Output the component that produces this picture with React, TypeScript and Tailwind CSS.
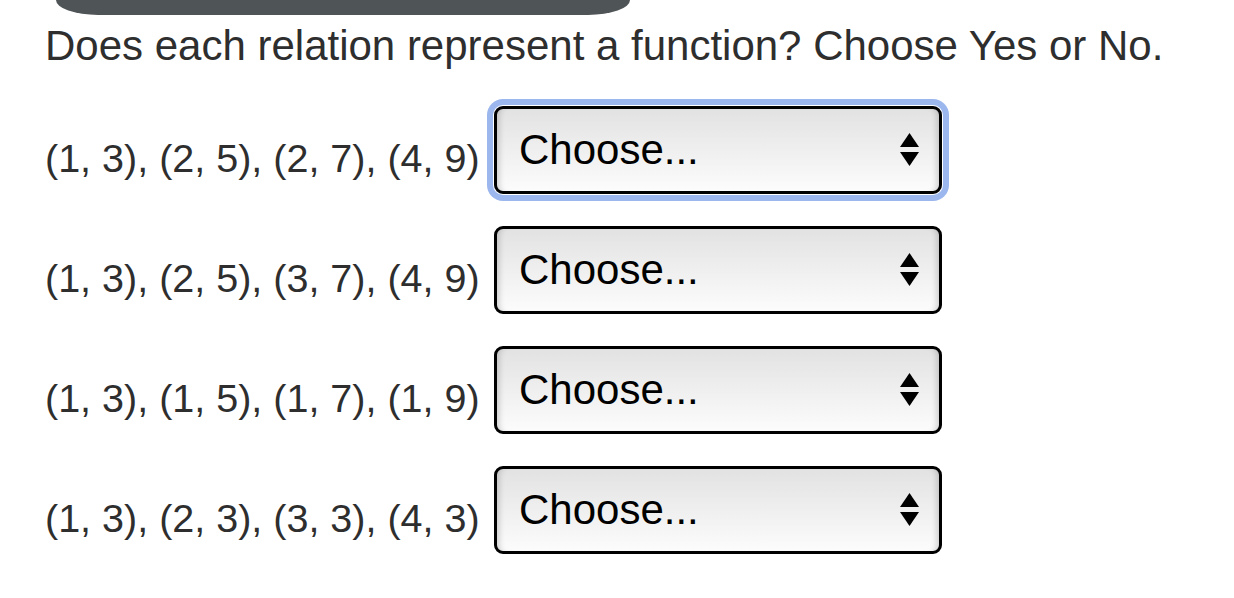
import React from 'react';

const relations = [
	'(1, 3), (2, 5), (2, 7), (4, 9)',
	'(1, 3), (2, 5), (3, 7), (4, 9)',
	'(1, 3), (1, 5), (1, 7), (1, 9)',
	'(1, 3), (2, 3), (3, 3), (4, 3)',
];

const SelectArrows = () => (
	<svg width="19" height="34" viewBox="0 0 19 34" className="shrink-0">
		<polygon points="9.5,0 19,14 0,14" fill="#000" />
		<polygon points="0,19 19,19 9.5,33" fill="#000" />
	</svg>
);

const ChooseBox = ({ focused }: { focused: boolean }) => (
	<div
		className={`flex h-[88px] w-[448px] shrink-0 items-center justify-between rounded-[9px] border-[3px] border-black bg-gradient-to-b from-[#e2e2e2] via-[#efefef] to-[#fcfcfc] pl-[22px] pr-[20px] ${
			focused
				? 'shadow-[inset_7px_0_6px_-5px_rgba(0,0,0,0.18),inset_-7px_0_6px_-5px_rgba(0,0,0,0.18),0_0_0_1px_#ffffff,0_0_0_7px_#9bb7ee]'
				: 'shadow-[inset_7px_0_6px_-5px_rgba(0,0,0,0.18),inset_-7px_0_6px_-5px_rgba(0,0,0,0.18)]'
		}`}
	>
		<span className="text-[42px] leading-none text-black">Choose...</span>
		<SelectArrows />
	</div>
);

export default function App() {
	return (
		<div className="min-h-[598px] w-[1234px] bg-white font-['Liberation_Sans',Arial,sans-serif]">
			{/* cut-off header bar */}
			<div className="ml-[56px] h-[15px] w-[574px] rounded-bl-[42px_15px] rounded-br-[42px_15px] bg-[#4f5457]" />

			<div className="pl-[45px]">
				<h1 className="mt-[10px] text-[42px] font-normal leading-none text-[#2e2e2e]">
					Does each relation represent a function? Choose Yes or No.
				</h1>

				<div className="mt-[39px] flex flex-col gap-[32px]">
					{relations.map((rel, i) => (
						<div key={rel} className="flex items-center">
							<span className="w-[449px] shrink-0 whitespace-nowrap pt-[18px] text-[39.5px] leading-none text-[#2e2e2e]">
								{rel}
							</span>
							<ChooseBox focused={i === 0} />
						</div>
					))}
				</div>
			</div>
		</div>
	);
}
